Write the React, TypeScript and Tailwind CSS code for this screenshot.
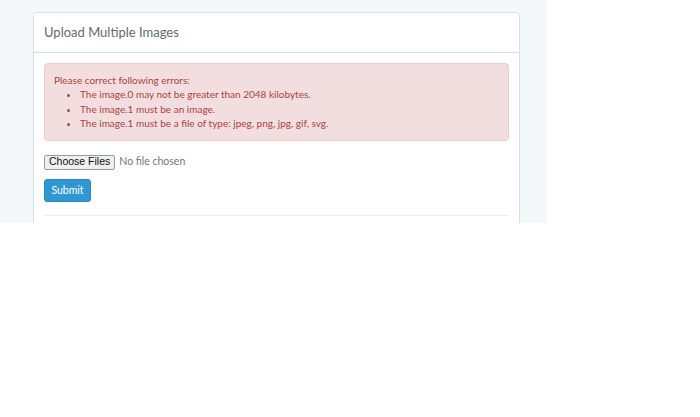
export default function App() {
  return (
    <div className="w-[700px] h-[417px] bg-white" style={{ fontFamily: "Lato, 'Open Sans', sans-serif" }}>
      <div className="w-[547px] h-[223px] bg-[#f5f8fa] overflow-hidden pl-[33px] pt-[12px]">
        <div className="w-[487px] h-[260px] bg-white border border-[#d3e0e9] rounded-[4px]">
          <div className="h-[40px] border-b border-[#d3e0e9] px-[10px] flex items-center text-[13px] text-[#636b6f]">
            Upload Multiple Images
          </div>
          <div className="px-[10px] pt-[10px]">
            <div className="bg-[#f2dede] border border-[#ebccd1] rounded-[4px] text-[#a94442] text-[10px] leading-[14.3px] pl-[9px] pt-[9px] pb-[10px]">
              <div>Please correct following errors:</div>
              <ul className="list-disc pl-[26px]">
                <li>The image.0 may not be greater than 2048 kilobytes.</li>
                <li>The image.1 must be an image.</li>
                <li>The image.1 must be a file of type: jpeg, png, jpg, gif, svg.</li>
              </ul>
            </div>
            <div className="mt-[14px] flex items-center text-[10.5px] text-[#777] h-[14px]">
              <span className="h-[15px] px-[4px] flex items-center border border-[#999] rounded-[2px] bg-[#efefef] text-[#111] text-[10.5px]" style={{ fontFamily: "'Liberation Sans', sans-serif" }}>Choose Files</span>
              <span className="ml-[4px]">No file chosen</span>
            </div>
            <button className="mt-[10px] w-[47px] h-[23px] bg-[#3097d1] border border-[#2a88bd] rounded-[3px] text-white text-[10.5px]">Submit</button>
            <div className="mt-[13px] border-t border-[#eee]" />
          </div>
        </div>
      </div>
    </div>
  );
}
